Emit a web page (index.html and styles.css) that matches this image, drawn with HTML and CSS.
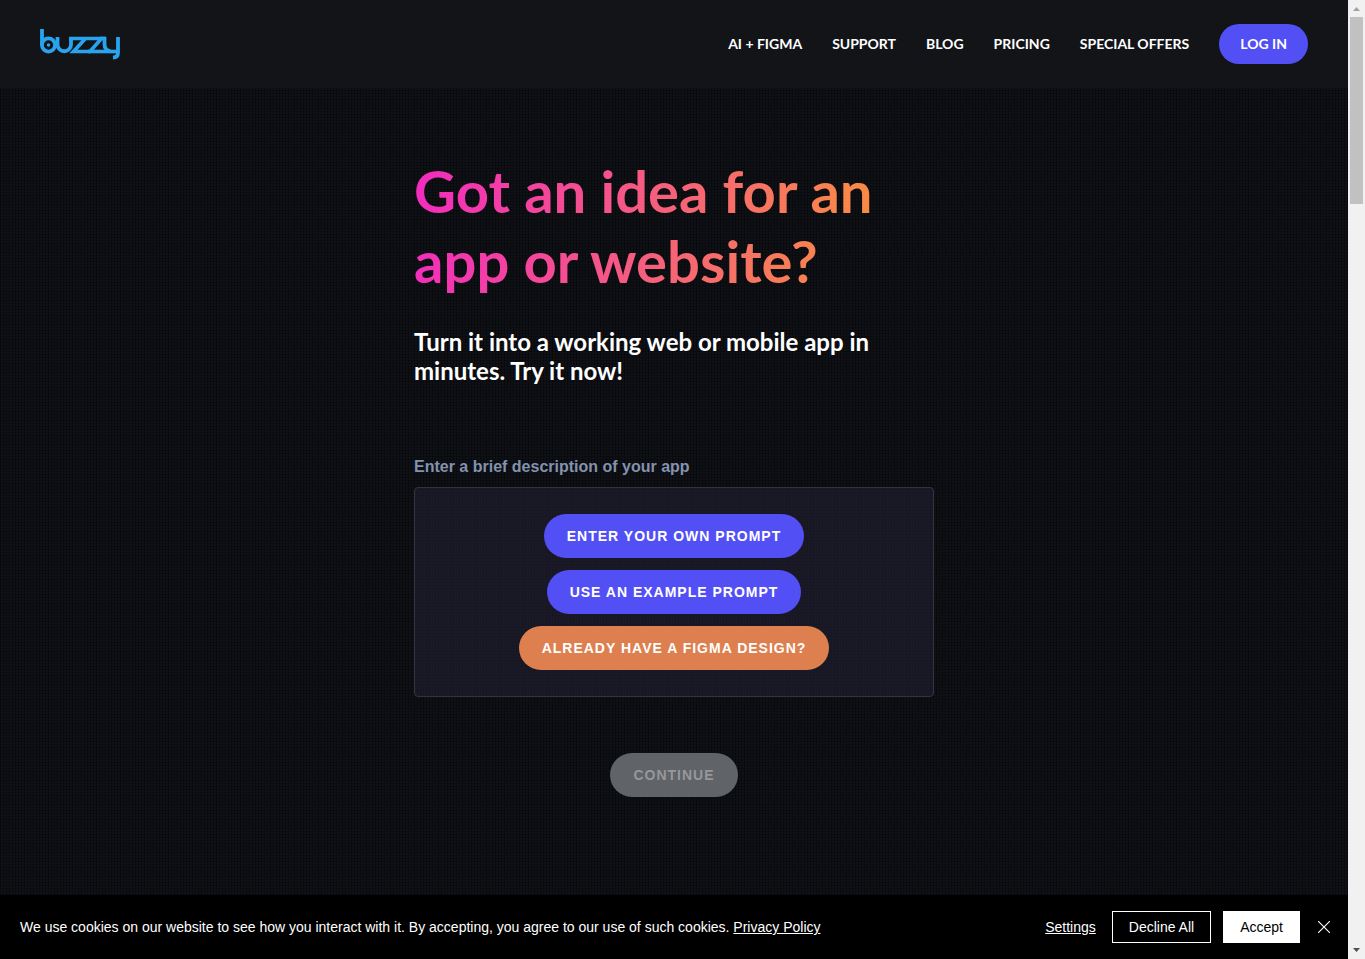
FILE: index.html
```html
<!DOCTYPE html>
<html lang="en">
<head>
<meta charset="utf-8">
<meta name="viewport" content="width=device-width, initial-scale=1">
<title>Buzzy</title>
<link rel="stylesheet" href="styles.css">
</head>
<body>
<div class="page">
  <header class="header">
    <a class="logo" href="#" aria-label="buzzy">
      <svg width="80" height="31" viewBox="0 0 80 31" fill="none" stroke="#29a3ef" stroke-width="3.800">
        <path d="M2 0V16"/>
        <circle cx="8.500" cy="16" r="6.600"/>
        <circle cx="8.500" cy="16" r="1.800" fill="#29a3ef" stroke="none"/>
        <path d="M17.500 8V15.500A6.700 6.700 0 0 0 31 15.500V8"/>
        <path d="M29.200 9.500H45.500L33.500 22.500H50L61.500 9.500H45" stroke-width="3.600"/>
        <path d="M48 22.500H77" stroke-width="3.600"/>
        <path d="M60 9.500H66" stroke-width="3.600"/>
        <path d="M64.500 8V15.500A6.500 6.500 0 0 0 71 22.300M78 8V23.500Q78 28.500 73 28.500"/>
      </svg>
    </a>
    <nav class="nav">
      <a href="#">AI + FIGMA</a>
      <a href="#">SUPPORT</a>
      <a href="#">BLOG</a>
      <a href="#">PRICING</a>
      <a href="#">SPECIAL OFFERS</a>
      <a class="login" href="#">LOG IN</a>
    </nav>
  </header>
  <main class="hero">
    <div class="content">
      <h1 class="title"><span>Got an idea for an</span> <span>app or website?</span></h1>
      <p class="subtitle">Turn it into a working web or mobile app in minutes. Try it now!</p>
      <h2 class="prompt-label" id="prompt-label">Enter a brief description of your app</h2>
      <div class="prompt-box" role="group" aria-labelledby="prompt-label">
        <button class="pill" type="button">ENTER YOUR OWN PROMPT</button>
        <button class="pill" type="button">USE AN EXAMPLE PROMPT</button>
        <button class="pill pill-orange" type="button">ALREADY HAVE A FIGMA DESIGN?</button>
      </div>
      <button class="pill pill-disabled" type="button" disabled>CONTINUE</button>
    </div>
  </main>
  <section class="cookies" aria-label="Cookies">
    <p class="cookie-text">We use cookies on our website to see how you interact with it. By accepting, you agree to our use of such cookies. <a href="#">Privacy Policy</a></p>
    <div class="cookie-actions">
      <button class="settings" type="button">Settings</button>
      <button class="decline" type="button">Decline All</button>
      <button class="accept" type="button">Accept</button>
      <button class="close" type="button" aria-label="Close">
        <svg width="12" height="12" viewBox="0 0 12 12" stroke="#fff" stroke-width="1.100"><path d="M0 0L12 12M12 0L0 12"/></svg>
      </button>
    </div>
  </section>
</div>
<div class="scrollbar" aria-hidden="true">
  <svg class="arrow" width="17" height="17" viewBox="0 0 17 17"><path d="M5 11L8.500 7L12 11Z" fill="#a3a3a3"/></svg>
  <div class="track"><div class="thumb"></div></div>
  <svg class="arrow" width="17" height="17" viewBox="0 0 17 17"><path d="M5 6L8.500 10L12 6Z" fill="#505050"/></svg>
</div>
</body>
</html>
```
FILE: styles.css
```css
* { box-sizing: border-box; }

body {
  margin: 0;
  min-height: 100vh;
  display: grid;
  grid-template-columns: 1fr 17px;
  background: #0d0f13;
  color: #fff;
  font-family: "Liberation Sans", Arial, sans-serif;
}

a { color: inherit; }
button { font-family: inherit; cursor: pointer; }
h1, h2, p { margin: 0; }

.page { display: flex; flex-direction: column; }

.header {
  display: flex;
  align-items: center;
  justify-content: space-between;
  padding: 24px 40px;
  background: #121418;
}
.logo { display: flex; }
.logo svg { display: block; }

.nav {
  display: flex;
  align-items: center;
  gap: 30px;
  font: 700 14px/20px Lato, sans-serif;
}
.nav a { text-decoration: none; }
.nav .login {
  padding: 10px 21px;
  border-radius: 20px;
  background: #524ff5;
}

.hero {
  flex: 1;
  padding: 68px 24px 97px;
  background-color: #0f1116;
  background-image:
    repeating-linear-gradient(90deg, #0005 0 1px, transparent 1px 3px),
    repeating-linear-gradient(0deg, #0004 0 1px, transparent 1px 3px);
}
.content {
  display: flex;
  flex-direction: column;
  max-width: 520px;
  margin: 0 auto;
}
.title {
  display: flex;
  flex-direction: column;
  align-items: flex-start;
  font: 700 58px/70px Lato, sans-serif;
  background: linear-gradient(100deg, #f22ac0, #f98a45 95%);
  width: fit-content;
  background-clip: text;
  -webkit-background-clip: text;
  color: transparent;
}
.subtitle {
  margin-top: 31px;
  font: 700 24px/29px Lato, sans-serif;
}
.prompt-label {
  margin-top: 72px;
  font-size: 16px;
  line-height: 20px;
  color: #8492ae;
}
.prompt-box {
  display: flex;
  flex-direction: column;
  align-items: center;
  gap: 12px;
  margin-top: 10px;
  padding: 26px 24px;
  border: 1px solid #34323f;
  border-radius: 4px;
  background: #26213880;
}
.pill {
  height: 44px;
  padding: 0 23px;
  border: 0;
  border-radius: 22px;
  background: #524ff5;
  color: #fff;
  font-size: 14px;
  font-weight: 700;
  letter-spacing: 1px;
}
.pill-orange { background: #de7f50; }
.pill-disabled {
  align-self: center;
  margin-top: 56px;
  background: #606367;
  color: #96989b;
}

.cookies {
  display: flex;
  align-items: center;
  justify-content: space-between;
  gap: 24px;
  padding: 16px 18px 16px 20px;
  background: #000;
  font-size: 14px;
  line-height: 20px;
}
.cookie-actions { display: flex; align-items: center; }
.cookie-actions button {
  height: 32px;
  padding: 0 16px;
  border: 0;
  background: none;
  color: #fff;
  font-size: 14px;
}
.cookie-actions .settings { text-decoration: underline; }
.cookie-actions .decline { border: 1px solid #fff; }
.cookie-actions .accept { margin: 0 18px 0 12px; padding: 0 17px; background: #fff; color: #000; }
.cookie-actions .close { padding: 0; }
.close svg { display: block; }

.scrollbar { display: flex; flex-direction: column; background: #f1f1f1; }
.arrow { display: block; }
.track { flex: 1; padding: 0 2px; }
.thumb { height: 187px; background: #c1c1c1; }
```
